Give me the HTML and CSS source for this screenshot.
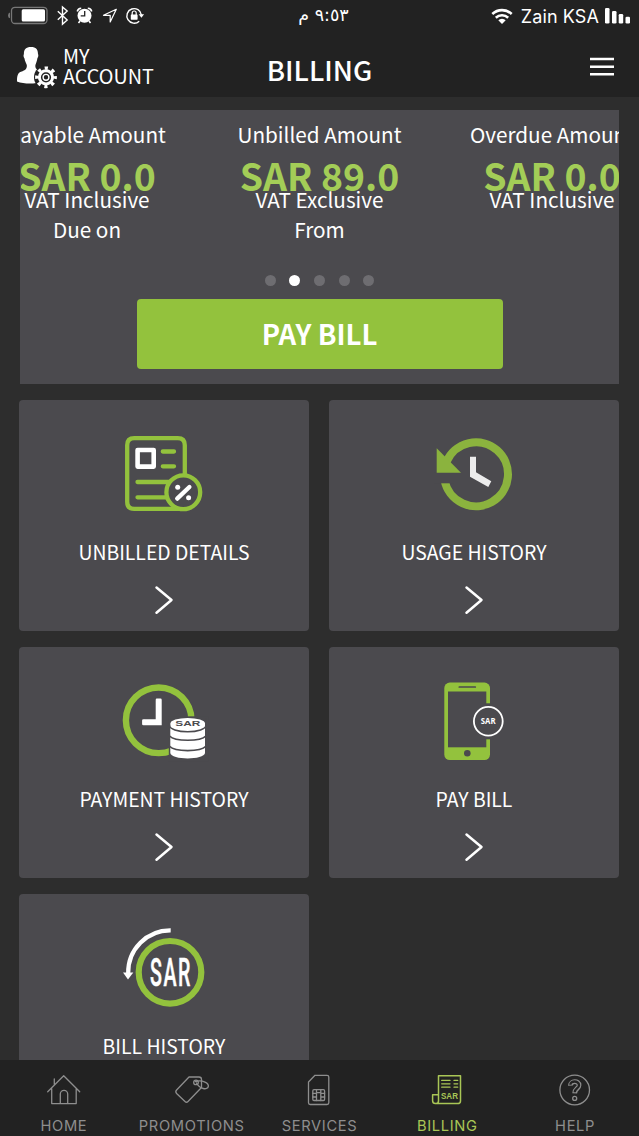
FILE: index.html
```
<!DOCTYPE html>
<html lang="en">
<head>
    <meta charset="UTF-8">
    <meta name="viewport" content="width=device-width, initial-scale=1.0">
    <title>Billing</title>
    <link rel="stylesheet" href="styles.css">
</head>
<body>
    <header class="header">
        <div class="status-bar">
            <svg class="status-left" width="150" height="32" viewBox="0 0 150 32">
                <rect x="11.5" y="7.3" width="35.5" height="16.2" rx="3.5" fill="none" stroke="#777" stroke-width="1.3"/>
                <path d="M10 12.5Q8 13 8 15.4T10 18.3Z" fill="#777"/>
                <rect x="21.7" y="9.2" width="23.3" height="12.4" rx="1.5" fill="#fff"/>
                <path d="M57.8 11.2L67.2 20L62.5 24.2V7L67.2 11L57.8 19.8" fill="none" stroke="#fff" stroke-width="1.4"/>
                <circle cx="84.5" cy="15.7" r="7" fill="#fff"/>
                <path d="M77.3 11.5A4 4 0 0 1 81.2 8.2M87.8 8.2A4 4 0 0 1 91.7 11.5M80 21L78.5 23M89 21L90.5 23" fill="none" stroke="#fff" stroke-width="1.6"/>
                <path d="M84.7 11V15.8H80.7" fill="none" stroke="#222" stroke-width="1.3"/>
                <path d="M116.3 9.3L103.5 15.3H110.2V22Z" fill="none" stroke="#fff" stroke-width="1.2" stroke-linejoin="round"/>
                <path d="M139.2 21.2A7.3 7.3 0 1 1 141.4 15" fill="none" stroke="#fff" stroke-width="1.4"/>
                <path d="M138.7 14.3H144.1L141.4 17.8Z" fill="#fff"/>
                <rect x="130.8" y="14.5" width="6.8" height="5.2" rx=".6" fill="#fff"/>
                <path d="M132.2 15V13A2 2 0 0 1 136.2 13V15" fill="none" stroke="#fff" stroke-width="1.2"/>
            </svg>
            <span class="time" dir="rtl" lang="ar">٩:٥٣ م</span>
            <div class="status-right">
                <svg width="22" height="17" viewBox="0 0 22 17">
                    <path d="M1.3 6A14 14 0 0 1 20.7 6M4.8 9.7A9 9 0 0 1 17.2 9.7" fill="none" stroke="#fff" stroke-width="2.6"/>
                    <path d="M7.3 12.3A5.3 5.3 0 0 1 14.7 12.3L11 16Z" fill="#fff"/>
                </svg>
                <span class="carrier">Zain KSA</span>
                <svg width="26" height="17" viewBox="0 0 26 17" fill="#fff">
                    <rect x="0" y="0" width="4.5" height="15.5" rx="1.3"/>
                    <rect x="7" y="3" width="4.5" height="12.5" rx="1.3"/>
                    <rect x="13.7" y="6" width="4.5" height="9.5" rx="1.3"/>
                    <rect x="20.5" y="8.7" width="4.5" height="6.8" rx="1.3"/>
                </svg>
            </div>
        </div>
        <div class="title-bar">
            <a class="account">
                <svg width="46" height="46" viewBox="14 44 46 46">
                    <path d="M31 47C26 47 23.8 49.5 23.9 54C23.1 55.5 23.8 57.5 24.4 58.3C25 61.5 26.3 63.5 26.8 65C27.2 68.5 25.5 70.3 21 71.8C17.5 73 17 76.5 17 81.5C24 84.2 35 84 42 82V71.5C36.5 70 35 68.5 35.4 65C36 63.5 37 61 37.4 58.3C38.2 57 38.7 55.5 38 54C38 49.5 36 47 31 47Z" fill="#fff"/>
                    <circle cx="46" cy="77.3" r="12" fill="#222"/>
                    <circle cx="46" cy="77.3" r="9.2" fill="none" stroke="#fff" stroke-width="3.4" stroke-dasharray="3.2 4.026" stroke-dashoffset="1.6"/>
                    <circle cx="46" cy="77.3" r="6.6" fill="none" stroke="#fff" stroke-width="3"/>
                    <circle cx="46" cy="77.3" r="2.9" fill="none" stroke="#fff" stroke-width="1.4"/>
                </svg>
                <span>MY<br>ACCOUNT</span>
            </a>
            <h1>BILLING</h1>
            <svg class="menu" width="24" height="20" viewBox="0 0 24 20">
                <path d="M0 2H24M0 9.7H24M0 17.2H24" stroke="#fff" stroke-width="2.4"/>
            </svg>
        </div>
    </header>

    <main class="content">
        <section class="summary">
            <div class="slides">
                <div class="slide">
                    <p class="slide-title">Payable Amount</p>
                    <p class="amount">SAR 0.0</p>
                    <p class="note">VAT Inclusive</p>
                    <p class="note">Due on</p>
                </div>
                <div class="slide">
                    <p class="slide-title">Unbilled Amount</p>
                    <p class="amount">SAR 89.0</p>
                    <p class="note">VAT Exclusive</p>
                    <p class="note">From</p>
                </div>
                <div class="slide">
                    <p class="slide-title">Overdue Amount</p>
                    <p class="amount">SAR 0.0</p>
                    <p class="note">VAT Inclusive</p>
                </div>
            </div>
            <div class="dots">
                <span class="dot"></span>
                <span class="dot active"></span>
                <span class="dot"></span>
                <span class="dot"></span>
                <span class="dot"></span>
            </div>
            <button class="pay-button">PAY BILL</button>
        </section>

        <section class="cards">
            <a class="card">
                <svg class="card-icon" viewBox="0 0 100 100" fill="none" stroke="#93c23d" stroke-width="4.3" stroke-linecap="round">
                    <path d="M70.8 52V20.2Q70.8 13.2 63.8 13.2H20.2Q13.2 13.2 13.2 20.2V76.8Q13.2 83.9 20.2 83.9H68"/>
                    <path d="M48.8 26.5H60M48.8 41.3H60M23.5 57H58M23.5 72.3H56"/>
                    <rect x="23.6" y="25" width="16.1" height="16.6" stroke="#fff" stroke-width="4.6" stroke-linejoin="round"/>
                    <circle cx="69.3" cy="67.3" r="16.9" fill="#4b4a4e"/>
                    <path d="M63.2 73.6L75.4 62" stroke="#fff"/>
                    <circle cx="63.7" cy="62.3" r="2.5" fill="#fff" stroke="none"/>
                    <circle cx="74.6" cy="72.8" r="2.5" fill="#fff" stroke="none"/>
                </svg>
                <h2>UNBILLED DETAILS</h2>
                <svg class="chevron" viewBox="0 0 20 30"><path d="M2.5 2.5L17.5 15L2.5 27.8"/></svg>
            </a>
            <a class="card">
                <svg class="card-icon" viewBox="0 0 100 100">
                    <path d="M22.5 36.8A32 32 0 1 1 20.6 55.5" fill="none" stroke="#8bb33e" stroke-width="8"/>
                    <rect x="10" y="47.7" width="20" height="10.6" fill="#4b4a4e"/>
                    <path d="M12.7 23.3V47.7H37Z" fill="#8bb33e"/>
                    <path d="M46 31.7H52V47.3L67.3 56.3L64.3 62L46 51.7Z" fill="#ececec"/>
                </svg>
                <h2>USAGE HISTORY</h2>
                <svg class="chevron" viewBox="0 0 20 30"><path d="M2.5 2.5L17.5 15L2.5 27.8"/></svg>
            </a>
            <a class="card">
                <svg class="card-icon" viewBox="0 1 100 100">
                    <circle cx="44.7" cy="49.3" r="32.8" fill="none" stroke="#93c23d" stroke-width="6.4"/>
                    <rect x="54.8" y="45.3" width="40" height="45" fill="#4b4a4e"/>
                    <path d="M44.7 29.3V51.3H29.8" fill="none" stroke="#fff" stroke-width="6"/>
                    <path d="M42.9 28.8H46.5M29.3 49.5V53.1" stroke="#fff" stroke-width="2.4" stroke-linecap="round"/>
                    <path d="M56.3 52.6V82C57 89.2 90.3 89.2 91 82V52.6Z" fill="#fff"/>
                    <ellipse cx="73.7" cy="52.6" rx="17.4" ry="5.7" fill="#fff"/>
                    <path d="M55.5 47V54.6A18.1 6.2 0 0 0 91.9 54.6V47" fill="none" stroke="#4b4a4e" stroke-width="1.5"/>
                    <path d="M55.5 65A19 6 0 0 0 91.9 65M55.5 75.3A19 6 0 0 0 91.9 75.3" fill="none" stroke="#4b4a4e" stroke-width="1.6"/>
                    <text class="coin-text" x="61.3" y="54.8" textLength="25" lengthAdjust="spacingAndGlyphs">SAR</text>
                </svg>
                <h2>PAYMENT HISTORY</h2>
                <svg class="chevron" viewBox="0 0 20 30"><path d="M2.5 2.5L17.5 15L2.5 27.8"/></svg>
            </a>
            <a class="card">
                <svg class="card-icon" viewBox="0 1 100 100">
                    <rect x="20.3" y="11.6" width="45.7" height="77.4" rx="5.5" fill="#93c23d"/>
                    <rect x="24" y="20.5" width="38.3" height="55.8" fill="#4b4a4e"/>
                    <rect x="58" y="32.3" width="12" height="36" fill="#4b4a4e"/>
                    <path d="M35.3 16H51.3" stroke="#4b4a4e" stroke-width="1.7" stroke-linecap="round"/>
                    <circle cx="43.3" cy="82.2" r="3.3" fill="#4b4a4e"/>
                    <circle cx="64.3" cy="50.3" r="14.4" fill="#4b4a4e" stroke="#fff" stroke-width="1.8"/>
                    <text class="phone-text" x="56.8" y="53.3" textLength="14.8" lengthAdjust="spacingAndGlyphs">SAR</text>
                </svg>
                <h2>PAY BILL</h2>
                <svg class="chevron" viewBox="0 0 20 30"><path d="M2.5 2.5L17.5 15L2.5 27.8"/></svg>
            </a>
            <a class="card">
                <svg class="card-icon" viewBox="0 0 100 100">
                    <circle cx="56" cy="53.3" r="31.3" fill="none" stroke="#93c23d" stroke-width="6.2"/>
                    <path d="M56.7 11.3A42 42 0 0 0 14.2 54" fill="none" stroke="#fff" stroke-width="4.2"/>
                    <path d="M9 53.5H19.3L14 60.5Z" fill="#fff"/>
                    <text class="bill-text" x="36" y="67" textLength="42" lengthAdjust="spacingAndGlyphs">SAR</text>
                </svg>
                <h2>BILL HISTORY</h2>
                <svg class="chevron" viewBox="0 0 20 30"><path d="M2.5 2.5L17.5 15L2.5 27.8"/></svg>
            </a>
        </section>
    </main>

    <nav class="tabs">
        <a class="tab">
            <svg viewBox="0 0 40 40">
                <path d="M3.7 21.7L19.7 5.7L35.7 21.7M7.7 18.5V33.6H32.2V18.5M16.3 33.6V24A3.7 3.7 0 0 1 23.7 24V33.6M10.3 9V14.5"/>
            </svg>
            HOME
        </a>
        <a class="tab">
            <svg viewBox="0 0 40 40">
                <path d="M17 7H27Q29.5 7 29.5 9.5V17.5L16 31.5Q14.5 33 13 31.5L4.6 23.5Q3 21.7 4.6 20Z"/>
                <circle cx="24" cy="12.4" r="2.3"/>
                <path d="M23.5 11.5C31 9.5 37 13.5 36.3 16.5C35.5 20.5 27.5 19 24.5 13"/>
            </svg>
            PROMOTIONS
        </a>
        <a class="tab">
            <svg viewBox="0 0 40 40">
                <path d="M9.5 12L16 5.3H28Q29.8 5.3 29.8 7V32.8Q29.8 34.5 28 34.5H11.2Q9.5 34.5 9.5 32.8Z"/>
                <rect x="13.8" y="19.7" width="11.8" height="10.8" rx="1.2"/>
                <path d="M17.5 19.7V30.5M21.8 19.7V30.5M13.8 23.3H17.5M13.8 27H17.5M21.8 23.3H25.6M21.8 27H25.6M17.5 22.7H21.8"/>
            </svg>
            SERVICES
        </a>
        <a class="tab active">
            <svg viewBox="0 0 40 40">
                <path d="M11.5 31V5.8H33.5V31Q33.5 33.6 30.5 33.6H8.5Q5.6 33.6 5.6 30.8V24.7H11.5V31Q11.5 33.6 8.5 33.6" stroke-width="1.5"/>
                <path d="M14.7 10.4H23M14.7 13.8H23M14.7 17.2H23M27 10.4H30.7M27 13.8H30.7M27 17.2H30.7" stroke-width="1.3"/>
                <text class="tab-text" x="14" y="28.8" textLength="17" lengthAdjust="spacingAndGlyphs">SAR</text>
            </svg>
            BILLING
        </a>
        <a class="tab">
            <svg viewBox="0 0 40 40">
                <circle cx="19.7" cy="20" r="14.8"/>
                <path class="mark-outer" d="M15.4 15.7C15.2 10.5 24.1 10.3 24 15.2C24 18.6 19.8 18.3 19.7 23.4"/>
                <path class="mark-inner" d="M15.4 14.7C15.2 10.5 24.1 10.3 24 15.2C24 18.6 19.8 18.3 19.7 22.3"/>
                <circle cx="19.7" cy="28.4" r="2"/>
            </svg>
            HELP
        </a>
    </nav>
</body>
</html>
```
FILE: styles.css
```
* {
    box-sizing: border-box;
    margin: 0;
    padding: 0;
}

body {
    display: flex;
    flex-direction: column;
    width: 639px;
    height: 1136px;
    overflow: hidden;
    background-color: #2d2d2d;
    color: #fff;
    font-family: "Noto Sans CJK SC", "Noto Sans", sans-serif;
}

svg {
    display: block;
    flex-shrink: 0;
}

/* Header */
.header {
    height: 97px;
    background-color: #222;
    flex-shrink: 0;
}

.status-bar {
    display: grid;
    grid-template-columns: 1fr auto 1fr;
    align-items: center;
    height: 32px;
}

.time {
    font-family: "DejaVu Sans", sans-serif;
    font-size: 17.5px;
    line-height: 30px;
    margin: 0 0 2px 8px;
}

.status-right {
    display: flex;
    align-items: center;
    justify-content: flex-end;
    padding-right: 8px;
}

.carrier {
    font-family: Inter, sans-serif;
    font-size: 18px;
    letter-spacing: 0.1px;
    margin: 0 6px 0 8px;
}

.title-bar {
    display: grid;
    grid-template-columns: 1fr auto 1fr;
    align-items: center;
    height: 65px;
    padding: 0 25px 0 14px;
}

.account {
    display: flex;
    align-items: center;
    gap: 3px;
    margin-top: 4px;
    font-size: 19.8px;
    line-height: 20px;
}

.account span {
    margin-bottom: 2px;
}

h1 {
    font-size: 27.5px;
    font-weight: 500;
    line-height: 40px;
    margin: 9px 0 0 11px;
}

.menu {
    justify-self: end;
    margin-top: 5px;
}

/* Summary carousel */
.content {
    flex: 1;
    min-height: 0;
    overflow: hidden;
    padding-top: 13px;
}

.summary {
    display: flex;
    flex-direction: column;
    align-items: center;
    width: 599px;
    height: 274px;
    margin-left: 20px;
    padding-top: 12px;
    background-color: #4b4a4e;
    overflow: hidden;
}

.slides {
    display: flex;
    justify-content: center;
    width: 100%;
    height: 152.5px;
    clip-path: inset(0 0 0 1px);
}

.slide {
    flex: 0 0 232.5px;
    text-align: center;
    white-space: nowrap;
    font-size: 20.7px;
}

.slide-title {
    height: 23px;
    line-height: 25px;
    overflow: hidden;
}

.amount {
    margin-top: 21px;
    color: #a3cd57;
    font-size: 37.4px;
    font-weight: 700;
    line-height: 18px;
}

.note {
    position: relative;
    line-height: 30px;
}

.dots {
    display: flex;
    gap: 13.7px;
}

.dot {
    width: 11px;
    height: 11px;
    border-radius: 50%;
    background-color: #6e6d71;
}

.dot.active {
    background-color: #fff;
}

.pay-button {
    width: 366px;
    height: 70px;
    margin-top: 13.5px;
    padding-bottom: 2px;
    border: none;
    border-radius: 4px;
    background-color: #93c23d;
    color: #fff;
    font-family: inherit;
    font-size: 27.5px;
    font-weight: 700;
}

/* Cards */
.cards {
    display: grid;
    grid-template-columns: 290px 290px;
    grid-auto-rows: 231px;
    gap: 16px 20px;
    padding: 16px 0 0 19px;
}

.card {
    display: flex;
    flex-direction: column;
    align-items: center;
    padding-top: 25px;
    border-radius: 4px;
    background-color: #4b4a4e;
}

.card-icon {
    width: 100px;
    height: 100px;
}

.card h2 {
    margin-top: 12px;
    font-size: 19.4px;
    font-weight: 400;
    line-height: 30px;
}

.chevron {
    width: 20px;
    height: 30px;
    margin-top: 18px;
    fill: none;
    stroke: #fff;
    stroke-width: 2.5;
    stroke-linecap: round;
    stroke-linejoin: round;
}

.coin-text {
    font: 700 6.4px "Liberation Sans", sans-serif;
    fill: #4b4a4e;
}

.phone-text {
    font: 700 8px "Open Sans", sans-serif;
    fill: #fff;
}

.bill-text {
    font: 500 38.5px Roboto, sans-serif;
    letter-spacing: 3px;
    fill: #fff;
    stroke: #fff;
    stroke-width: 0.5;
}

/* Bottom tabs */
.tabs {
    display: flex;
    height: 76px;
    background-color: #222;
    flex-shrink: 0;
}

.tab {
    display: flex;
    flex-direction: column;
    align-items: center;
    flex: 1 1 0;
    padding-top: 10px;
    color: #8e8e8e;
    font-family: Inter, sans-serif;
    font-size: 14.7px;
    letter-spacing: 0.65px;
    line-height: 32px;
}

.tab svg {
    width: 40px;
    height: 40px;
    fill: none;
    stroke: currentColor;
    stroke-width: 1.3;
    stroke-linecap: round;
    stroke-linejoin: round;
}

.tab.active {
    color: #a9c656;
}

.tab-text {
    font: 700 9.5px "Liberation Sans", sans-serif;
    letter-spacing: 0;
    fill: currentColor;
    stroke: none;
}

.tab .mark-outer {
    stroke-width: 4.8;
    stroke-linecap: butt;
}

.tab .mark-inner {
    stroke: #222;
    stroke-width: 2.4;
    stroke-linecap: butt;
}
```
